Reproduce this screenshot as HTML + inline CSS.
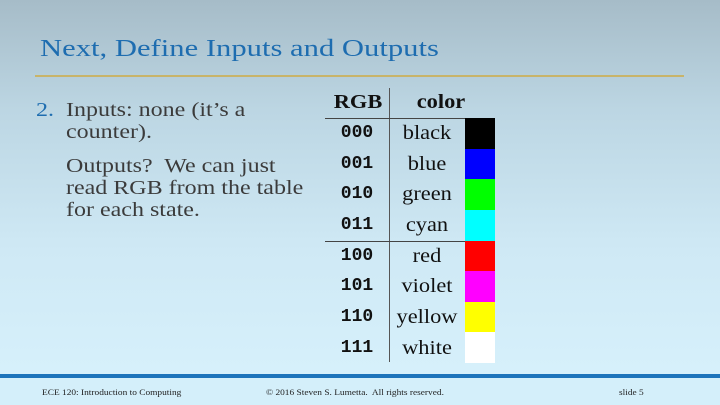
<!DOCTYPE html>
<html><head><style>
*{margin:0;padding:0}
body{width:720px;height:405px;position:relative;overflow:hidden;font-family:"Liberation Serif",serif;
background:linear-gradient(#a6bcc8 0px,#bcd6e3 110px,#cfe9f5 250px,#d6f0fb 372px);}
.a{position:absolute;white-space:nowrap}
.s{transform-origin:0 0}
.t{left:40px;top:35px;font-size:24.5px;color:#1e6db0;transform:scaleX(1.25)}
.rule{left:35px;top:75px;width:649px;height:2px;background:#c8b46a}
.b{font-size:20px;color:#3b3b3b;line-height:22px;transform:scaleX(1.2)}
.m{font-family:"Liberation Mono",monospace;font-weight:bold;font-size:18px;color:#111;width:64px;text-align:center;left:325px}
.c{font-size:20px;color:#111;width:76px;text-align:center;left:389px;transform:scaleX(1.12);transform-origin:38px 0}
.sw{left:465px;width:30px;height:31px}
.f{font-size:8px;color:#222;top:388px;transform:scaleX(1.17)}
</style></head><body>
<div class="a s t">Next, Define Inputs and Outputs</div>
<div class="a rule"></div>
<div class="a s b" style="left:36px;top:99px;color:#1e6db0">2.</div>
<div class="a s b" style="left:66px;top:99px">Inputs: none (it’s a<br>counter).</div>
<div class="a s b" style="left:66px;top:155px">Outputs?&nbsp; We can just<br>read RGB from the table<br>for each state.</div>

<div class="a" style="left:389px;top:88px;width:1px;height:274px;background:#555"></div>
<div class="a" style="left:325px;top:118px;width:140px;height:1px;background:#444"></div>
<div class="a" style="left:325px;top:241px;width:140px;height:1px;background:#444"></div>
<div class="a c" style="left:320px;top:91px;font-weight:bold">RGB</div>
<div class="a c" style="left:403px;top:91px;font-weight:bold">color</div>

<div class="a m" style="top:123px">000</div><div class="a c" style="top:122px">black</div><div class="a sw" style="top:118px;background:#000"></div>
<div class="a m" style="top:154px">001</div><div class="a c" style="top:153px">blue</div><div class="a sw" style="top:149px;background:#0000ff"></div>
<div class="a m" style="top:184px">010</div><div class="a c" style="top:183px">green</div><div class="a sw" style="top:179px;background:#00ff00"></div>
<div class="a m" style="top:215px">011</div><div class="a c" style="top:214px">cyan</div><div class="a sw" style="top:210px;background:#00ffff"></div>
<div class="a m" style="top:246px">100</div><div class="a c" style="top:245px">red</div><div class="a sw" style="top:241px;background:#ff0000"></div>
<div class="a m" style="top:276px">101</div><div class="a c" style="top:275px">violet</div><div class="a sw" style="top:271px;background:#ff00ff"></div>
<div class="a m" style="top:307px">110</div><div class="a c" style="top:306px">yellow</div><div class="a sw" style="top:302px;background:#ffff00"></div>
<div class="a m" style="top:338px">111</div><div class="a c" style="top:337px">white</div><div class="a sw" style="top:332px;background:#fff"></div>

<div class="a" style="left:0;top:374px;width:720px;height:4px;background:#1d74bb"></div>
<div class="a" style="left:0;top:378px;width:720px;height:27px;background:#d4effa"></div>
<div class="a s f" style="left:42px">ECE 120: Introduction to Computing</div>
<div class="a s f" style="left:266px">© 2016 Steven S. Lumetta.&nbsp; All rights reserved.</div>
<div class="a s f" style="left:619px">slide 5</div>
</body></html>
